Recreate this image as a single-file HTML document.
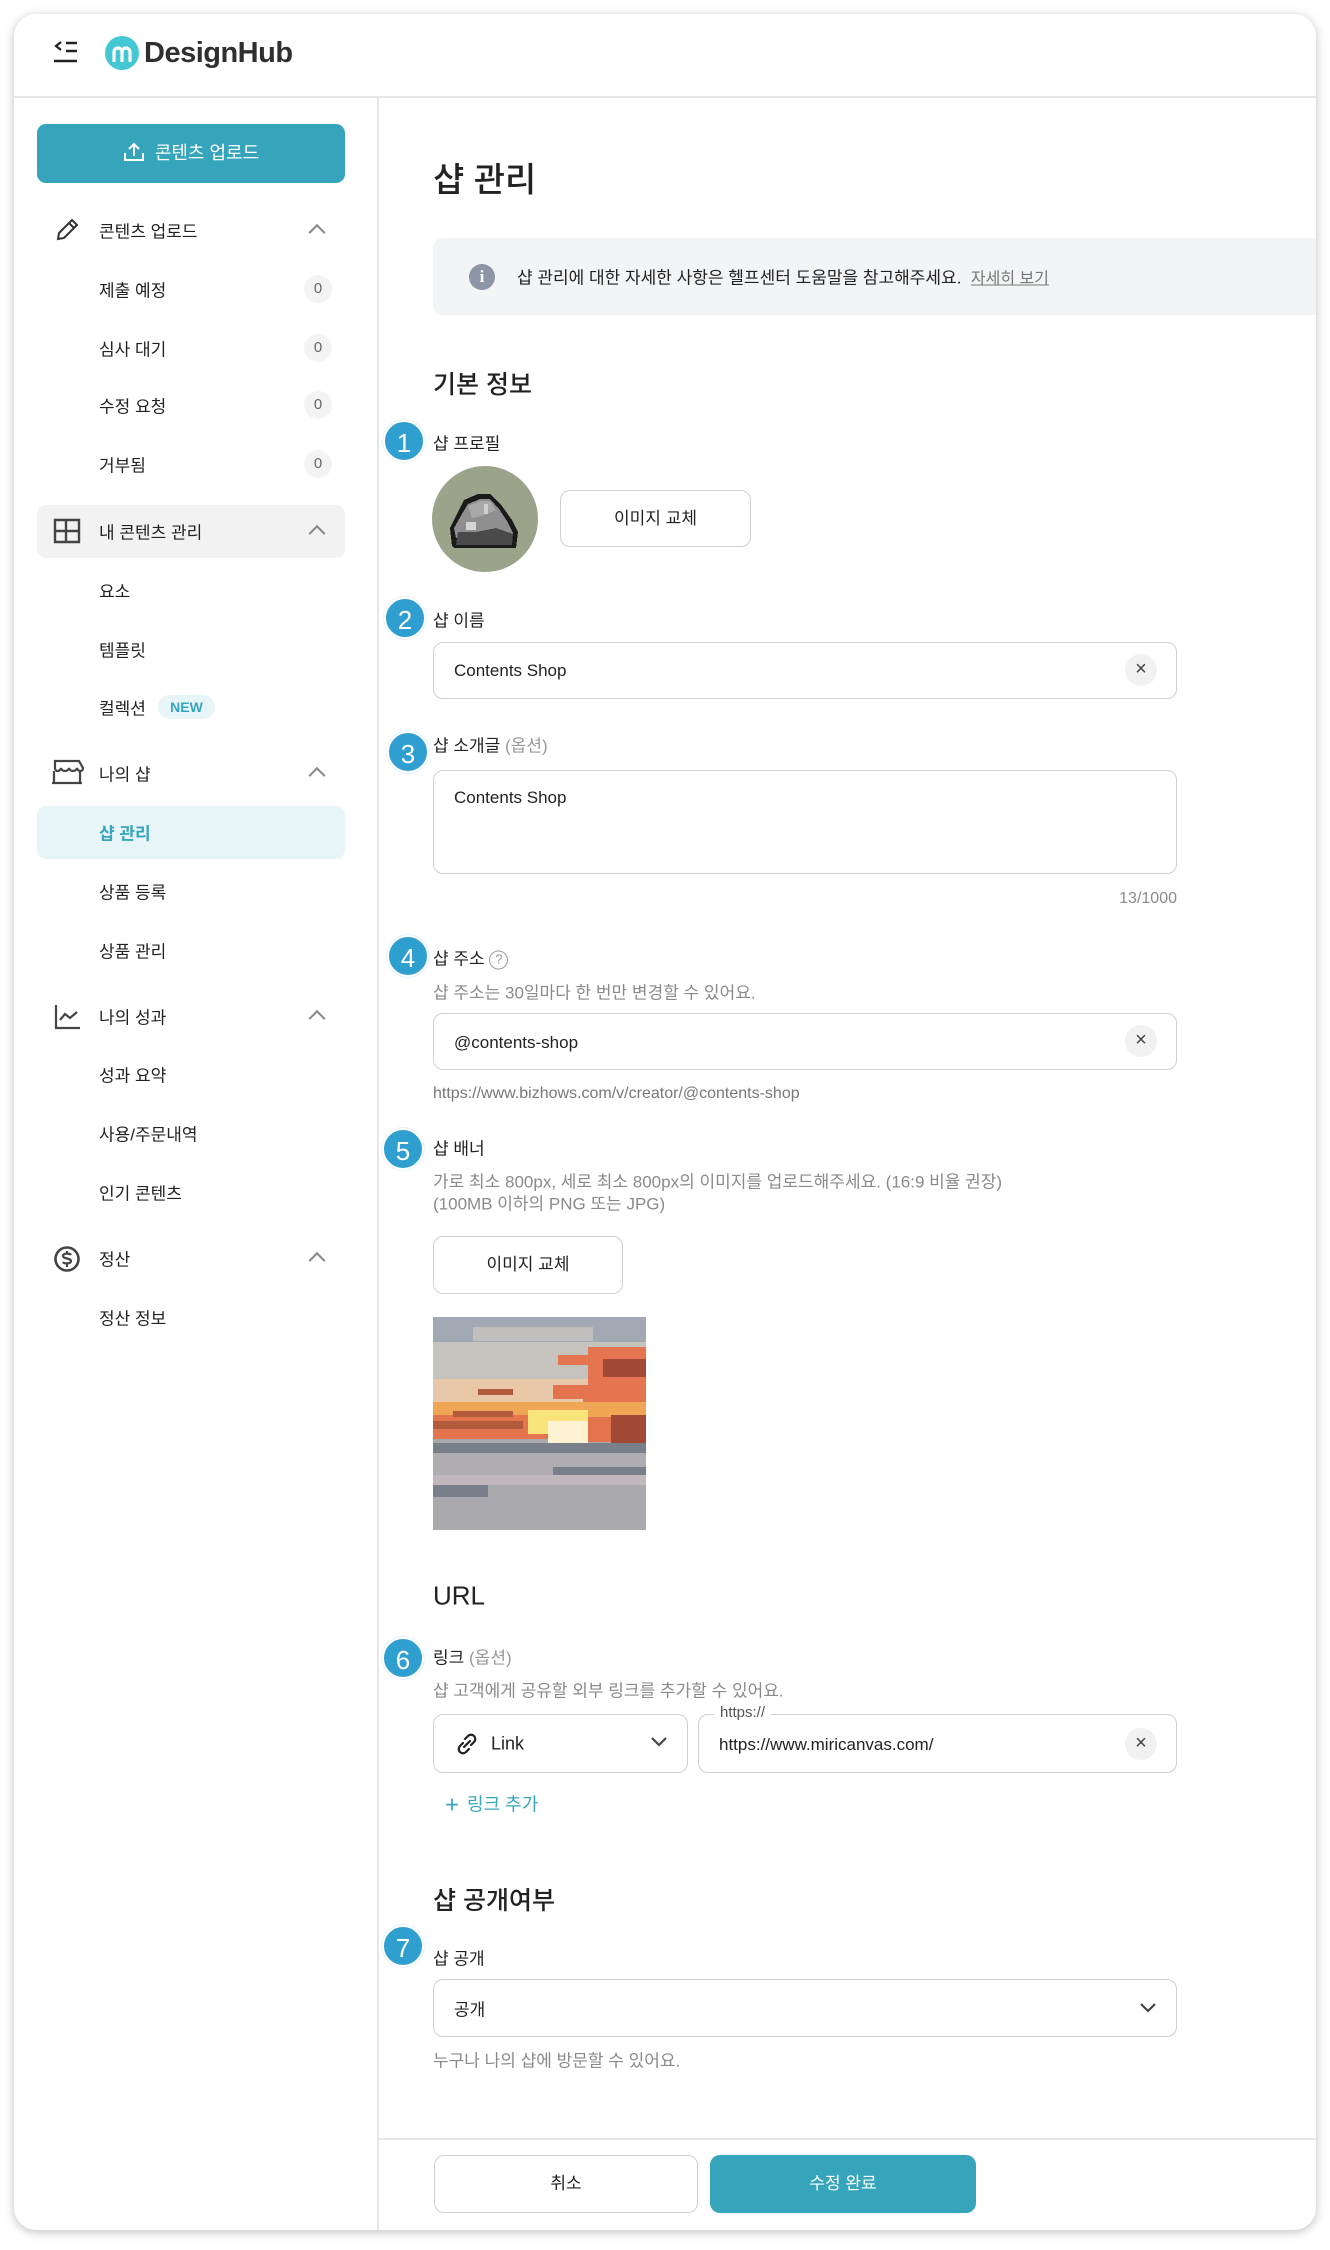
<!DOCTYPE html>
<html><head><meta charset="utf-8"><style>
*{box-sizing:border-box;margin:0;padding:0}
body{width:1330px;height:2250px;background:#fff;font-family:"Liberation Sans","Noto Sans CJK KR",sans-serif;color:#222;position:relative;overflow:hidden}
.card{position:absolute;left:14px;top:14px;width:1302px;height:2216px;background:#fff;border-radius:22px;box-shadow:0 2px 10px rgba(0,0,0,.25);overflow:hidden}
.a{position:absolute;white-space:nowrap}
.nav{font-size:17px;color:#222;transform:translateY(-50%)}
.badge0{position:absolute;width:28px;height:28px;border-radius:50%;background:#f3f3f3;color:#666;font-size:15px;text-align:center;line-height:28px;transform:translateY(-50%)}
.chev{position:absolute;width:12px;height:12px;border-left:2px solid #888;border-top:2px solid #888;transform:translateY(-30%) rotate(45deg)}
.num{position:absolute;width:42px;height:42px;border-radius:50%;background:#2f9fd0;color:#fff;font-size:26px;text-align:center;line-height:42px;transform:translate(-50%,-50%);border:2px solid #fff;box-shadow:0 0 0 1px #e6f3fa}
.lbl{font-size:17px;color:#222;transform:translateY(-50%)}
.help{font-size:17px;color:#8a8a8a;transform:translateY(-50%)}
.box{position:absolute;border:1.5px solid #cfcfcf;border-radius:10px;background:#fff}
.clr{position:absolute;width:32px;height:32px;border-radius:50%;background:#f1f1f1;color:#444;font-size:20px;text-align:center;line-height:31px}
.btn{position:absolute;border:1.5px solid #cfcfcf;border-radius:10px;background:#fff;font-size:17px;text-align:center}
h2{position:absolute;font-size:26px;font-weight:500;transform:translateY(-50%);white-space:nowrap}
</style></head><body>
<div class="card">
<!-- header -->
<svg class="a" style="left:39px;top:26px" width="26" height="24" viewBox="0 0 26 24"><path d="M8 2 L3 6 L8 10" fill="none" stroke="#222" stroke-width="2.2"/><path d="M13 3H24M13 11H24M1 21H24" stroke="#222" stroke-width="2.4"/></svg>
<div class="a" style="left:91px;top:22px;width:34px;height:34px;border-radius:50%;background:#43c7d3"></div>
<svg class="a" style="left:97px;top:30px" width="22" height="18" viewBox="0 0 22 18"><path d="M3 17V8a4 4 0 0 1 8 0v9M11 8a4 4 0 0 1 8 0v9" fill="none" stroke="#fff" stroke-width="3.2" stroke-linecap="round"/></svg>
<div class="a" style="left:130px;top:23px;font-size:29px;font-weight:bold;color:#2f2f2f;letter-spacing:-0.5px">DesignHub</div>
<div class="a" style="left:0;top:82px;width:1302px;height:1.5px;background:#e6e6e6"></div>
<div class="a" style="left:363px;top:83px;width:1.5px;height:2140px;background:#e6e6e6"></div>

<!-- sidebar -->
<div class="a" style="left:23px;top:110px;width:308px;height:59px;border-radius:9px;background:#36a5bc;color:#fff;font-size:18px;text-align:center;line-height:59px">
<svg style="vertical-align:-3px;margin-right:10px" width="22" height="20" viewBox="0 0 22 20"><path d="M11 14V2M6 7l5-5 5 5M2 11v7h18v-7" fill="none" stroke="#fff" stroke-width="2"/></svg>콘텐츠 업로드</div>

<svg class="a" style="left:40px;top:203px" width="26" height="26" viewBox="0 0 26 26"><path d="M4 22l1-6L18 3l5 5L10 21z M15 6l5 5" fill="none" stroke="#333" stroke-width="2"/></svg>
<div class="a nav" style="left:85px;top:216px">콘텐츠 업로드</div><div class="chev" style="left:297px;top:216px"></div>
<div class="a nav" style="left:85px;top:275px">제출 예정</div><div class="badge0" style="left:290px;top:275px">0</div>
<div class="a nav" style="left:85px;top:334px">심사 대기</div><div class="badge0" style="left:290px;top:334px">0</div>
<div class="a nav" style="left:85px;top:391px">수정 요청</div><div class="badge0" style="left:290px;top:391px">0</div>
<div class="a nav" style="left:85px;top:450px">거부됨</div><div class="badge0" style="left:290px;top:450px">0</div>

<div class="a" style="left:23px;top:491px;width:308px;height:53px;border-radius:9px;background:#f2f2f2"></div>
<svg class="a" style="left:39px;top:504px" width="28" height="26" viewBox="0 0 28 26"><path d="M2 2h24v22H2zM2 13h24M13 2v22" fill="none" stroke="#444" stroke-width="2.4"/></svg>
<div class="a nav" style="left:85px;top:517px">내 콘텐츠 관리</div><div class="chev" style="left:297px;top:517px"></div>
<div class="a nav" style="left:85px;top:576px">요소</div>
<div class="a nav" style="left:85px;top:635px">템플릿</div>
<div class="a nav" style="left:85px;top:693px">컬렉션</div>
<div class="a" style="left:144px;top:681px;width:57px;height:24px;border-radius:12px;background:#e8f5f8;color:#36a5bc;font-size:14px;font-weight:bold;text-align:center;line-height:24px">NEW</div>

<svg class="a" style="left:36px;top:745px" width="34" height="26" viewBox="0 0 34 26"><path d="M5 2h24l4 7c0 4-5 4-6 0-1 4-7 4-8 0-1 4-7 4-8 0-1 4-6 4-6 0zM4 12v12h26V12M2 24h30" fill="none" stroke="#444" stroke-width="2.2"/></svg>
<div class="a nav" style="left:85px;top:759px">나의 샵</div><div class="chev" style="left:297px;top:759px"></div>
<div class="a" style="left:23px;top:792px;width:308px;height:53px;border-radius:9px;background:#e8f5f8"></div>
<div class="a nav" style="left:85px;top:818px;color:#36a5bc;font-weight:bold">샵 관리</div>
<div class="a nav" style="left:85px;top:877px">상품 등록</div>
<div class="a nav" style="left:85px;top:936px">상품 관리</div>

<svg class="a" style="left:40px;top:990px" width="28" height="26" viewBox="0 0 28 26"><path d="M2 1v23h24M6 16l5-6 5 4 7-6" fill="none" stroke="#444" stroke-width="2.2"/></svg>
<div class="a nav" style="left:85px;top:1002px">나의 성과</div><div class="chev" style="left:297px;top:1002px"></div>
<div class="a nav" style="left:85px;top:1060px">성과 요약</div>
<div class="a nav" style="left:85px;top:1119px">사용/주문내역</div>
<div class="a nav" style="left:85px;top:1178px">인기 콘텐츠</div>

<svg class="a" style="left:39px;top:1231px" width="28" height="28" viewBox="0 0 28 28"><circle cx="14" cy="14" r="11.5" fill="none" stroke="#444" stroke-width="2.6"/><path d="M18 10c-1-2-8-2-8 1s8 2 8 5-7 3-8 1M14 6v3M14 19v3" fill="none" stroke="#444" stroke-width="2.2"/></svg>
<div class="a nav" style="left:85px;top:1244px">정산</div><div class="chev" style="left:297px;top:1244px"></div>
<div class="a nav" style="left:85px;top:1303px">정산 정보</div>

<!-- main -->
<div class="a" style="left:419px;top:163px;font-size:34px;font-weight:500;transform:translateY(-50%)">샵 관리</div>
<div class="a" style="left:419px;top:224px;width:883px;height:77px;background:#f3f4f6;border-radius:10px 0 0 10px"></div>
<div class="a" style="left:455px;top:250px;width:26px;height:26px;border-radius:50%;background:#8d96a6;color:#fff;font-size:17px;font-weight:bold;text-align:center;line-height:26px;font-family:'Liberation Serif',serif">i</div>
<div class="a" style="left:503px;top:262px;font-size:17px;transform:translateY(-50%)">샵 관리에 대한 자세한 사항은 헬프센터 도움말을 참고해주세요. &nbsp;<span style="color:#777;text-decoration:underline;font-size:16px">자세히 보기</span></div>

<h2 style="left:419px;top:369px;font-size:25px">기본 정보</h2>

<div class="num" style="left:390px;top:427px">1</div>
<div class="a lbl" style="left:419px;top:428px">샵 프로필</div>
<div class="a" style="left:418px;top:452px;width:106px;height:106px;border-radius:50%;background:#9ba38b;overflow:hidden">
<svg width="106" height="106" viewBox="0 0 106 106" shape-rendering="crispEdges"><path d="M20 80 L18 62 L26 46 L32 34 L46 28 L58 28 L70 40 L80 54 L86 66 L84 82 L22 82Z" fill="#1a1a1a"/><path d="M24 72 L22 62 L30 48 L36 38 L48 33 L58 33 L67 43 L75 55 L81 67 L80 72Z" fill="#8f8f8f"/><path d="M36 40 L48 35 L58 35 L64 44 L50 50 L40 52Z" fill="#a8a8a8"/><path d="M24 79 L80 79 L81 68 L64 62 L44 66 L26 66Z" fill="#4a4a4a"/><rect x="34" y="56" width="10" height="8" fill="#d4d4d4"/><rect x="52" y="38" width="4" height="10" fill="#cfcfcf"/></svg></div>
<div class="btn" style="left:546px;top:476px;width:191px;height:57px;line-height:55px">이미지 교체</div>

<div class="num" style="left:391px;top:604px">2</div>
<div class="a lbl" style="left:419px;top:605px">샵 이름</div>
<div class="box" style="left:419px;top:628px;width:744px;height:57px"></div>
<div class="a lbl" style="left:440px;top:657px">Contents Shop</div>
<div class="clr" style="left:1111px;top:640px">×</div>

<div class="num" style="left:394px;top:738px">3</div>
<div class="a lbl" style="left:419px;top:730px">샵 소개글 <span style="color:#999">(옵션)</span></div>
<div class="box" style="left:419px;top:756px;width:744px;height:104px"></div>
<div class="a lbl" style="left:440px;top:784px">Contents Shop</div>
<div class="a help" style="left:1163px;top:885px;transform:translate(-100%,-50%);font-size:16px">13/1000</div>

<div class="num" style="left:394px;top:942px">4</div>
<div class="a lbl" style="left:419px;top:943px">샵 주소 <span style="display:inline-block;width:19px;height:19px;border:1.5px solid #999;border-radius:50%;color:#999;font-size:13px;text-align:center;line-height:16px;vertical-align:1px">?</span></div>
<div class="a help" style="left:419px;top:977px">샵 주소는 30일마다 한 번만 변경할 수 있어요.</div>
<div class="box" style="left:419px;top:999px;width:744px;height:57px"></div>
<div class="a lbl" style="left:440px;top:1029px">@contents-shop</div>
<div class="clr" style="left:1111px;top:1011px">×</div>
<div class="a help" style="left:419px;top:1080px;color:#777;font-size:16px">https://www.bizhows.com/v/creator/@contents-shop</div>

<div class="num" style="left:389px;top:1135px">5</div>
<div class="a lbl" style="left:419px;top:1133px">샵 배너</div>
<div class="a help" style="left:419px;top:1166px">가로 최소 800px, 세로 최소 800px의 이미지를 업로드해주세요. (16:9 비율 권장)</div>
<div class="a help" style="left:419px;top:1188px">(100MB 이하의 PNG 또는 JPG)</div>
<div class="btn" style="left:419px;top:1222px;width:190px;height:58px;line-height:56px">이미지 교체</div>
<svg class="a" style="left:419px;top:1303px" width="213" height="213" viewBox="0 0 213 213" shape-rendering="crispEdges">
<rect width="213" height="213" fill="#a9a9ae"/>
<rect width="213" height="28" fill="#a3a9b4"/>
<rect x="40" y="10" width="120" height="14" fill="#c0bfbd"/>
<rect y="25" width="213" height="60" fill="#c6c3bf"/>
<rect y="62" width="213" height="38" fill="#e8c8a8"/>
<rect x="155" y="30" width="58" height="40" fill="#e57550"/>
<rect x="125" y="38" width="40" height="10" fill="#e57550"/>
<rect x="170" y="42" width="43" height="18" fill="#a04a35"/>
<rect x="150" y="70" width="63" height="55" fill="#e4744e"/>
<rect x="120" y="68" width="40" height="14" fill="#e4744e"/>
<rect y="85" width="213" height="15" fill="#f0a755"/>
<rect y="98" width="130" height="24" fill="#e4744e"/>
<rect y="104" width="90" height="8" fill="#b25a3c"/>
<rect x="20" y="94" width="60" height="6" fill="#b25a3c"/>
<rect x="95" y="93" width="60" height="24" fill="#f8e47a"/>
<rect x="115" y="104" width="40" height="22" fill="#fdf3d2"/>
<rect x="178" y="98" width="35" height="28" fill="#a04a35"/>
<rect x="45" y="72" width="35" height="6" fill="#b25a3c"/>
<rect y="126" width="213" height="10" fill="#7a7f8c"/>
<rect y="136" width="213" height="25" fill="#b0adb2"/>
<rect x="120" y="150" width="93" height="8" fill="#7a7f8c"/>
<rect y="158" width="213" height="10" fill="#c0b8bc"/>
<rect y="168" width="55" height="12" fill="#7a7f8c"/>
</svg>

<h2 style="left:419px;top:1582px;font-size:26px">URL</h2>
<div class="num" style="left:389px;top:1644px">6</div>
<div class="a lbl" style="left:419px;top:1642px">링크 <span style="color:#999">(옵션)</span></div>
<div class="a help" style="left:419px;top:1675px">샵 고객에게 공유할 외부 링크를 추가할 수 있어요.</div>
<div class="box" style="left:419px;top:1700px;width:255px;height:59px"></div>
<svg class="a" style="left:441px;top:1718px" width="24" height="24" viewBox="0 0 24 24"><path d="M10 7l3-3a4 4 0 0 1 6 6l-3 3M14 17l-3 3a4 4 0 0 1-6-6l3-3M9 15l6-6" fill="none" stroke="#222" stroke-width="2.2" stroke-linecap="round"/></svg>
<div class="a lbl" style="left:477px;top:1730px;font-size:18px">Link</div>
<svg class="a" style="left:636px;top:1722px" width="18" height="12" viewBox="0 0 18 12"><path d="M2 2l7 7 7-7" fill="none" stroke="#444" stroke-width="2.2"/></svg>
<div class="box" style="left:684px;top:1700px;width:479px;height:59px"></div>
<div class="a" style="left:700px;top:1690px;padding:0 6px;background:#fff;font-size:15px;color:#555">https://</div>
<div class="a lbl" style="left:705px;top:1731px">https://www.miricanvas.com/</div>
<div class="clr" style="left:1111px;top:1714px">×</div>
<div class="a" style="left:431px;top:1791px;font-size:18px;color:#36a5bc;transform:translateY(-50%)"><span style="font-size:24px;vertical-align:-2px;margin-right:8px">+</span>링크 추가</div>

<h2 style="left:419px;top:1885px;font-size:25px">샵 공개여부</h2>
<div class="num" style="left:389px;top:1932px">7</div>
<div class="a lbl" style="left:419px;top:1943px">샵 공개</div>
<div class="box" style="left:419px;top:1965px;width:744px;height:58px"></div>
<div class="a lbl" style="left:440px;top:1994px">공개</div>
<svg class="a" style="left:1125px;top:1988px" width="18" height="12" viewBox="0 0 18 12"><path d="M2 2l7 7 7-7" fill="none" stroke="#444" stroke-width="2.2"/></svg>
<div class="a help" style="left:419px;top:2045px">누구나 나의 샵에 방문할 수 있어요.</div>

<div class="a" style="left:364px;top:2124px;width:938px;height:1.5px;background:#e6e6e6"></div>
<div class="btn" style="left:420px;top:2141px;width:264px;height:58px;line-height:56px">취소</div>
<div class="a" style="left:696px;top:2141px;width:266px;height:58px;border-radius:10px;background:#36a5bc;color:#fff;font-size:17px;text-align:center;line-height:58px">수정 완료</div>
</div>
</body></html>
